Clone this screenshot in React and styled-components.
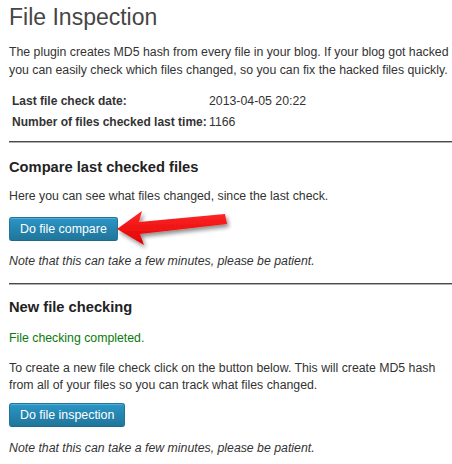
import styled, { createGlobalStyle } from "styled-components";

const GlobalStyle = createGlobalStyle`
  html, body {
    margin: 0;
    padding: 0;
    background: #fff;
  }
  body {
    font-family: "Liberation Sans", Arial, sans-serif;
    font-size: 12.3px;
    color: #333;
  }
`;

const Page = styled.div`
  position: relative;
  padding: 3px 0 0 9px;
`;

const Title = styled.h2`
  margin: 0;
  font-size: 23px;
  font-weight: normal;
  line-height: 28px;
  color: #464646;
`;

const Text = styled.p`
  margin: ${({ mt }) => mt || 0}px 0 0;
  line-height: ${({ lh }) => lh || 18}px;
  white-space: nowrap;
  color: ${({ success }) => (success ? "#0a7a0a" : "#333")};
  font-style: ${({ note }) => (note ? "italic" : "normal")};
`;

const Stats = styled.div`
  display: grid;
  grid-template-columns: 197px auto;
  grid-auto-rows: 21px;
  align-items: center;
  margin-top: 12px;
  padding-left: 3px;
`;

const Label = styled.div`
  font-size: 12px;
  font-weight: bold;
  line-height: 21px;
  white-space: nowrap;
`;

const Value = styled.div`
  line-height: 21px;
`;

const Divider = styled.div`
  margin-top: ${({ mt }) => mt}px;
  height: 1px;
  background: #4a4a4a;
  border-bottom: 1px solid #b0b0b0;
`;

const Heading = styled.h3`
  margin: ${({ mt }) => mt}px 0 0;
  font-size: 14.7px;
  font-weight: bold;
  line-height: 20px;
  color: #222;
`;

const Button = styled.button`
  display: block;
  margin-top: ${({ mt }) => mt}px;
  height: 24px;
  padding: 0 10px;
  font-family: "Liberation Sans", Arial, sans-serif;
  font-size: 12.4px;
  line-height: 22px;
  color: #fff;
  background-color: #21759b;
  background-image: linear-gradient(to bottom, #2a95c5, #21759b);
  border: 1px solid #21759b;
  border-bottom-color: #1e6a8d;
  border-radius: 3px;
  box-shadow: inset 0 1px 0 rgba(120, 200, 230, 0.5);
  cursor: pointer;
`;

const Arrow = styled.svg`
  position: absolute;
  left: 110px;
  top: 205px;
  overflow: visible;
`;

const PointerArrow = () => (
  <Arrow width="130" height="50" viewBox="110 205 130 50">
    <defs>
      <filter id="arrowShadow" x="-20%" y="-40%" width="140%" height="180%">
        <feGaussianBlur in="SourceAlpha" stdDeviation="2" />
        <feOffset dx="2" dy="3" result="blur" />
        <feComponentTransfer>
          <feFuncA type="linear" slope="0.45" />
        </feComponentTransfer>
        <feMerge>
          <feMergeNode />
          <feMergeNode in="SourceGraphic" />
        </feMerge>
      </filter>
      <linearGradient id="arrowFill" x1="0" y1="0" x2="0" y2="1">
        <stop offset="0" stopColor="#ff2a2a" />
        <stop offset="1" stopColor="#e00000" />
      </linearGradient>
    </defs>
    <polygon
      points="117,229 142,211 139,222 225,214 227,224 140,234 144,245"
      fill="url(#arrowFill)"
      filter="url(#arrowShadow)"
    />
  </Arrow>
);

const App = () => {
  return (
    <>
      <GlobalStyle />
      <Page>
        <Title>File Inspection</Title>
        <Text mt={12}>
          The plugin creates MD5 hash from every file in your blog. If your blog got hacked
          <br />
          you can easily check which files changed, so you can fix the hacked files quickly.
        </Text>
        <Stats>
          <Label>Last file check date:</Label>
          <Value>2013-04-05 20:22</Value>
          <Label>Number of files checked last time:</Label>
          <Value>1166</Value>
        </Stats>

        <Divider mt={8} />
        <Heading mt={14}>Compare last checked files</Heading>
        <Text mt={10}>Here you can see what files changed, since the last check.</Text>
        <Button mt={12}>Do file compare</Button>
        <Text mt={11} note>
          Note that this can take a few minutes, please be patient.
        </Text>

        <Divider mt={13} />
        <Heading mt={12}>New file checking</Heading>
        <Text mt={12} success>
          File checking completed.
        </Text>
        <Text mt={13} lh={17}>
          To create a new file check click on the button below. This will create MD5 hash
          <br />
          from all of your files so you can track what files changed.
        </Text>
        <Button mt={9}>Do file inspection</Button>
        <Text mt={12} note>
          Note that this can take a few minutes, please be patient.
        </Text>

        <PointerArrow />
      </Page>
    </>
  );
};

export default App;
